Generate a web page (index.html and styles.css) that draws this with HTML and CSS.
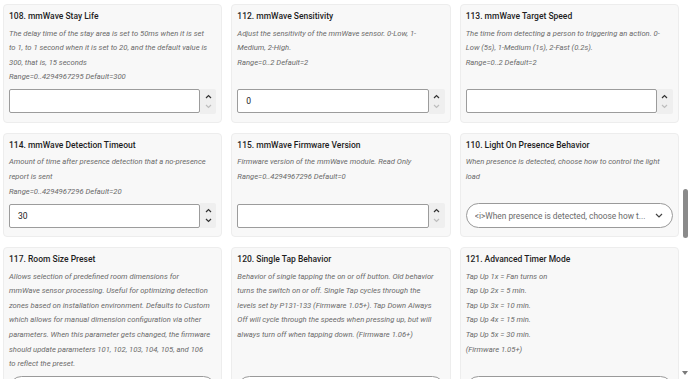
FILE: index.html
```html
<!DOCTYPE html>
<html>
  <head>
    <meta charset="utf-8">
    <link rel="stylesheet" href="styles.css">
  </head>
  <body>
    <div class="page">
      <div class="grid">

        <div class="card">
          <div class="title">108. mmWave Stay Life</div>
          <div class="desc">The delay time of the stay area is set to 50ms when it is set to 1, to 1 second when it is set to 20, and the default value is 300, that is, 15 seconds<br>Range=0..4294967295 Default=300</div>
          <div class="number">
            <div class="field"></div>
            <div class="spin">
              <svg class="up" width="7" height="5" viewBox="0 0 7 5"><polyline points="1,4 3.5,1.5 6,4"/></svg>
              <svg class="down off" width="7" height="5" viewBox="0 0 7 5"><polyline points="1,1 3.5,3.5 6,1"/></svg>
            </div>
          </div>
        </div>

        <div class="card">
          <div class="title">112. mmWave Sensitivity</div>
          <div class="desc">Adjust the sensitivity of the mmWave sensor. 0-Low, 1-Medium, 2-High.<br>Range=0..2 Default=2</div>
          <div class="number">
            <div class="field">0</div>
            <div class="spin">
              <svg class="up" width="7" height="5" viewBox="0 0 7 5"><polyline points="1,4 3.5,1.5 6,4"/></svg>
              <svg class="down off" width="7" height="5" viewBox="0 0 7 5"><polyline points="1,1 3.5,3.5 6,1"/></svg>
            </div>
          </div>
        </div>

        <div class="card">
          <div class="title">113. mmWave Target Speed</div>
          <div class="desc">The time from detecting a person to triggering an action. 0-Low (5s), 1-Medium (1s), 2-Fast (0.2s).<br>Range=0..2 Default=2</div>
          <div class="number">
            <div class="field"></div>
            <div class="spin">
              <svg class="up" width="7" height="5" viewBox="0 0 7 5"><polyline points="1,4 3.5,1.5 6,4"/></svg>
              <svg class="down off" width="7" height="5" viewBox="0 0 7 5"><polyline points="1,1 3.5,3.5 6,1"/></svg>
            </div>
          </div>
        </div>

        <div class="card">
          <div class="title">114. mmWave Detection Timeout</div>
          <div class="desc">Amount of time after presence detection that a no-presence report is sent<br>Range=0..4294967296 Default=20</div>
          <div class="number">
            <div class="field">30</div>
            <div class="spin">
              <svg class="up" width="7" height="5" viewBox="0 0 7 5"><polyline points="1,4 3.5,1.5 6,4"/></svg>
              <svg class="down" width="7" height="5" viewBox="0 0 7 5"><polyline points="1,1 3.5,3.5 6,1"/></svg>
            </div>
          </div>
        </div>

        <div class="card">
          <div class="title">115. mmWave Firmware Version</div>
          <div class="desc">Firmware version of the mmWave module. Read Only<br>Range=0..4294967296 Default=0</div>
          <div class="number">
            <div class="field"></div>
            <div class="spin">
              <svg class="up" width="7" height="5" viewBox="0 0 7 5"><polyline points="1,4 3.5,1.5 6,4"/></svg>
              <svg class="down off" width="7" height="5" viewBox="0 0 7 5"><polyline points="1,1 3.5,3.5 6,1"/></svg>
            </div>
          </div>
        </div>

        <div class="card">
          <div class="title">110. Light On Presence Behavior</div>
          <div class="desc">When presence is detected, choose how to control the light load</div>
          <div class="select">
            <span class="select-text">&lt;i&gt;When presence is detected, choose how t...</span>
            <svg width="8" height="5" viewBox="0 0 8 5"><polyline points="1,1 4,4 7,1"/></svg>
          </div>
        </div>

        <div class="card">
          <div class="title">117. Room Size Preset</div>
          <div class="desc">Allows selection of predefined room dimensions for mmWave sensor processing. Useful for optimizing detection zones based on installation environment. Defaults to Custom which allows for manual dimension configuration via other parameters. When this parameter gets changed, the firmware should update parameters 101, 102, 103, 104, 105, and 106 to reflect the preset.</div>
          <div class="select"></div>
        </div>

        <div class="card">
          <div class="title">120. Single Tap Behavior</div>
          <div class="desc">Behavior of single tapping the on or off button. Old behavior turns the switch on or off. Single Tap cycles through the levels set by P131-133 (Firmware 1.05+). Tap Down Always Off will cycle through the speeds when pressing up, but will always turn off when tapping down. (Firmware 1.06+)</div>
          <div class="select"></div>
        </div>

        <div class="card">
          <div class="title">121. Advanced Timer Mode</div>
          <div class="desc">Tap Up 1x = Fan turns on<br>Tap Up 2x = 5 min.<br>Tap Up 3x = 10 min.<br>Tap Up 4x = 15 min.<br>Tap Up 5x = 30 min.<br>(Firmware 1.05+)</div>
          <div class="select"></div>
        </div>

      </div>

      <!-- fake scrollbar, page is shown scrolled -->
      <div class="scrollbar">
        <div class="thumb"></div>
        <div class="arrow"></div>
      </div>
    </div>
  </body>
</html>
```

FILE: styles.css
```css
html, body {
  margin: 0;
  padding: 0;
  height: 379px;
  overflow: hidden;
  background-color: white;
  font-family: Roboto, "Noto Sans", Arial, sans-serif;
  color: #222;
}
.page {
  position: relative;
  width: 690px;
  height: 379px;
}
.grid {
  display: grid;
  grid-template-columns: repeat(3, 1fr);
  column-gap: 9px;
  row-gap: 10px;
  width: 680px;
  box-sizing: border-box;
  padding: 4px 1px 0 3px;
}
.card {
  display: flex;
  flex-direction: column;
  background-color: #f8f8f8;
  border: 1px solid #ededed;
  border-radius: 4px;
  padding: 5px 5px 8px 5px;
  min-width: 0;
}
.title {
  font-size: 8.5px;
  font-weight: 500;
  line-height: 12px;
  color: #1e1e1e;
}
.desc {
  margin: 4.5px 6px 4px 0;
  font-size: 7.65px;
  font-style: italic;
  line-height: 14.6px;
  color: #6a6a6a;
}

/* number input with spinner */
.number {
  display: flex;
  margin-top: auto;
  height: 25px;
}
.field {
  flex: 1;
  box-sizing: border-box;
  height: 24px;
  margin-top: 0.5px;
  background-color: white;
  border: 1px solid #9c9c9c;
  border-radius: 2px;
  padding: 0 8px;
  font-size: 8.5px;
  line-height: 22px;
  color: #222;
}
.spin {
  width: 16px;
  background-color: #efefef;
  border-radius: 0 2px 2px 0;
  display: flex;
  flex-direction: column;
  align-items: center;
  justify-content: space-around;
  padding: 3px 0;
  box-sizing: border-box;
}
.spin svg {
  fill: none;
  stroke: #333;
  stroke-width: 1.2;
}
.spin svg.off {
  stroke: #bdbdbd;
}

/* select */
.select {
  margin-top: auto;
  height: 25px;
  box-sizing: border-box;
  background-color: white;
  border: 1px solid #9a9a9a;
  border-radius: 13px;
  display: flex;
  align-items: center;
  padding: 0 9px 0 8px;
}
.select-text {
  flex: 1;
  font-size: 8.35px;
  color: #6a6a6a;
  white-space: nowrap;
  overflow: hidden;
}
.select svg {
  fill: none;
  stroke: #444;
  stroke-width: 1.2;
}

.scrollbar {
  position: absolute;
  top: 0;
  right: 0;
  width: 10px;
  height: 379px;
  background-color: white;
}
.thumb {
  position: absolute;
  top: 189px;
  left: 2.5px;
  width: 5px;
  height: 49px;
  border-radius: 3px;
  background-color: #8a8a8a;
}
.arrow {
  position: absolute;
  bottom: 4px;
  left: 2px;
  width: 0;
  height: 0;
  border-left: 3px solid transparent;
  border-right: 3px solid transparent;
  border-top: 4px solid #7a7a7a;
}
```
